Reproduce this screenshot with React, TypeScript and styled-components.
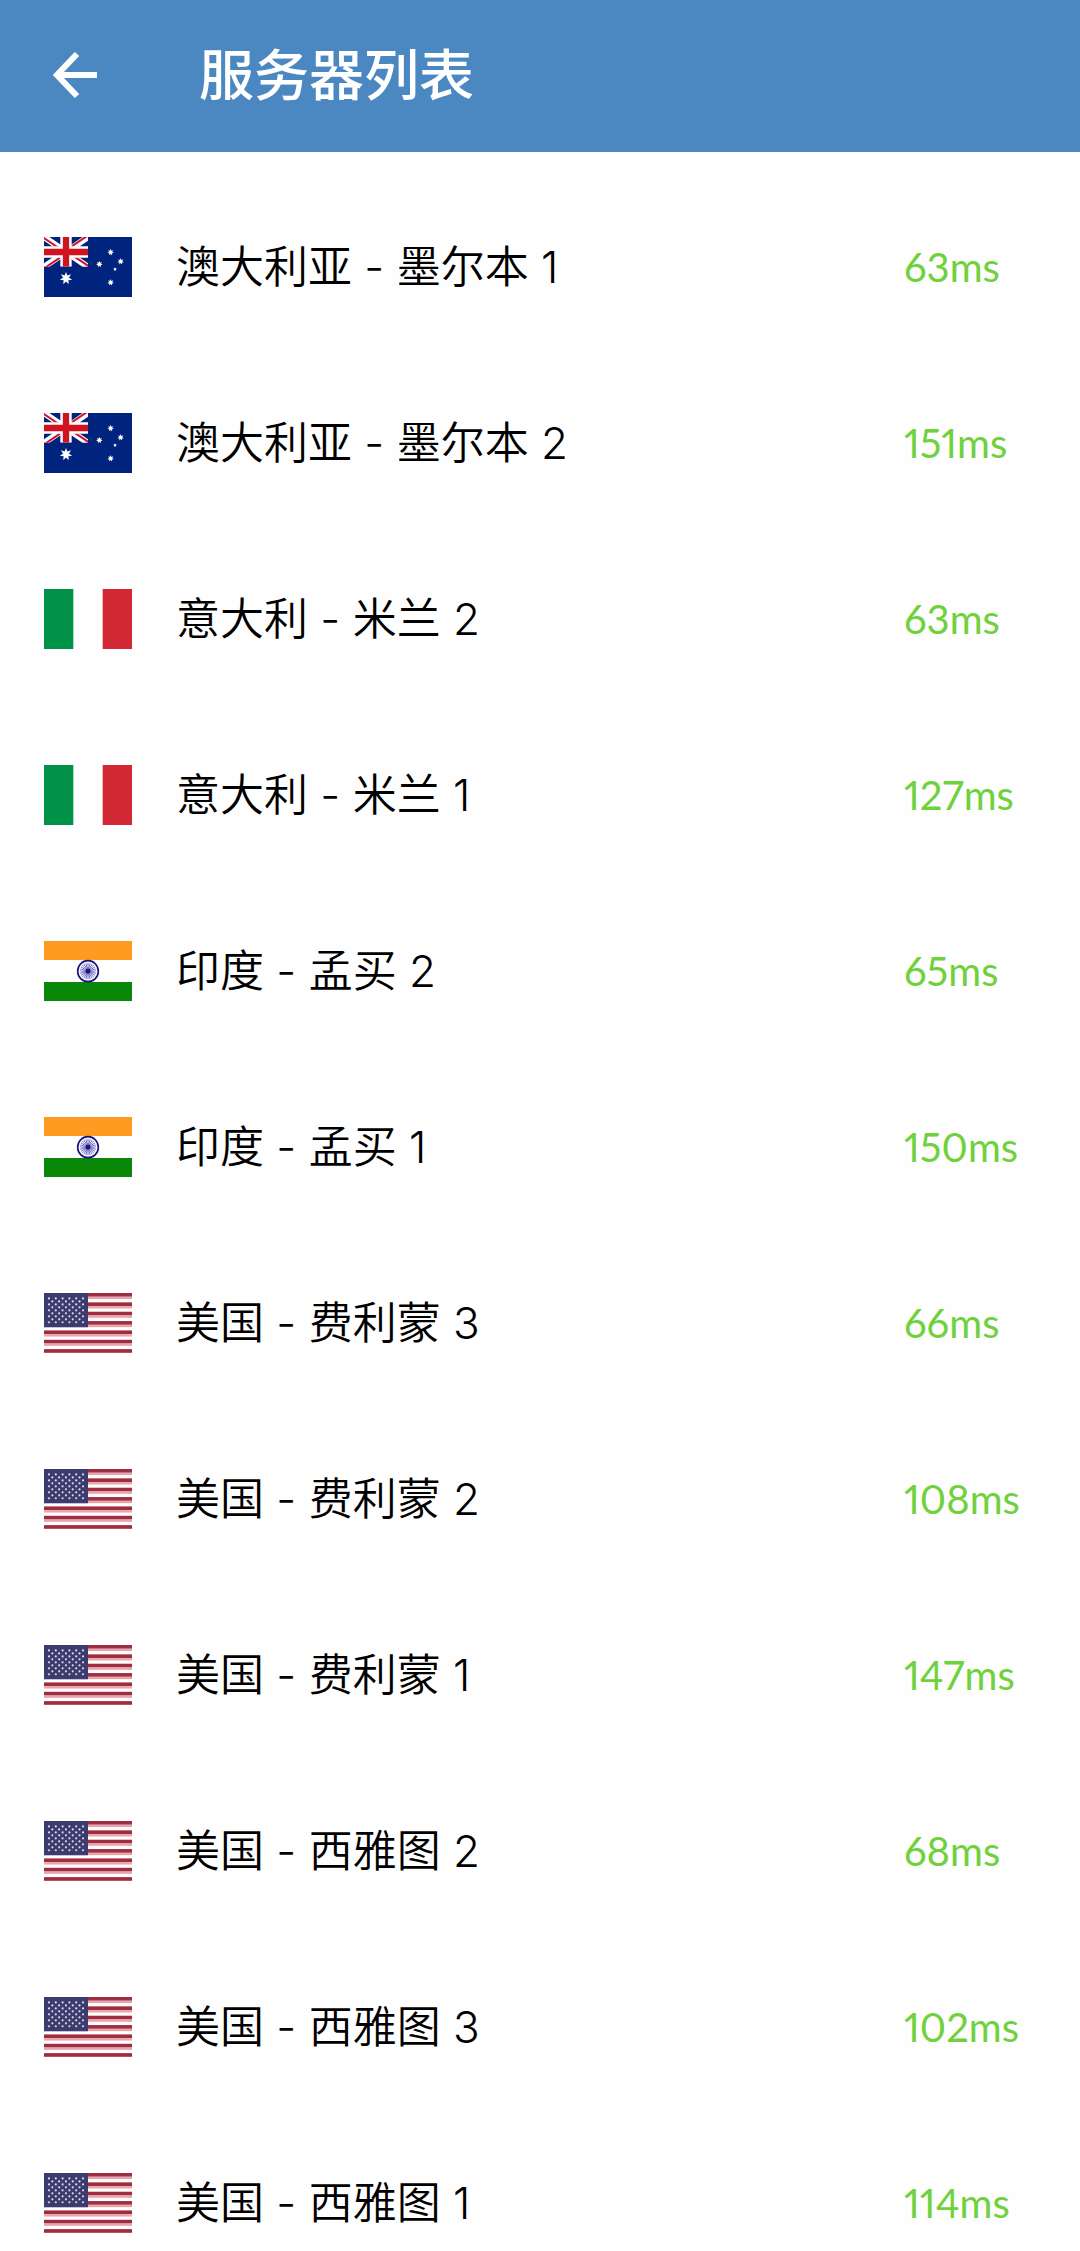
import React from "react";
import styled, { createGlobalStyle } from "styled-components";

const GlobalStyle = createGlobalStyle`
  *, *::before, *::after { box-sizing: border-box; }
  body {
    margin: 0;
    background: #fefefe;
    color: #000;
    font-family: Inter, "Noto Sans CJK SC", sans-serif;
  }
`;

const Screen = styled.div`
  min-height: 100vh;
  overflow: hidden;
`;

const AppBar = styled.header`
  display: flex;
  align-items: center;
  gap: 77px;
  height: 152px;
  padding: 0 28px 3px;
  background: #4b88c1;
  color: #fff;
`;

const BackButton = styled.button`
  display: flex;
  align-items: center;
  justify-content: center;
  width: 94px;
  height: 94px;
  padding: 0;
  border: 0;
  background: none;
  color: inherit;
  cursor: pointer;
`;

const Title = styled.h1`
  margin: 0;
  font-size: 55px;
  line-height: 80px;
  font-weight: 500;
`;

const List = styled.ul`
  margin: 0;
  padding: 27px 0 0;
  list-style: none;
`;

const Row = styled.button`
  display: flex;
  align-items: center;
  width: 100%;
  height: 176px;
  padding: 0 44px;
  border: 0;
  background: none;
  color: inherit;
  font: inherit;
  text-align: left;
  cursor: pointer;
`;

const FlagSvg = styled.svg`
  display: block;
  flex: none;
  width: 88px;
  height: 60px;
`;

const Name = styled.span`
  flex: 1;
  padding-left: 44px;
  font-size: 44px;
  line-height: 64px;
  font-weight: 350;
`;

const Ping = styled.span`
  width: 132px;
  color: #6fd13c;
  font-family: Lato, sans-serif;
  font-variant-numeric: proportional-nums;
  font-size: 40px;
  line-height: 64px;
  white-space: nowrap;
`;

type Country = "au" | "it" | "in" | "us";

const starPoints = (cx: number, cy: number, r: number, tips: number) =>
  Array.from({ length: tips * 2 }, (_, i) => {
    const radius = i % 2 ? r * 0.48 : r;
    const a = (Math.PI * i) / tips - Math.PI / 2;
    return `${(cx + radius * Math.cos(a)).toFixed(1)},${(cy + radius * Math.sin(a)).toFixed(1)}`;
  }).join(" ");

const Australia = () => (
  <>
    <rect width="264" height="177" fill="#00247d" />
    <svg width="132" height="88" viewBox="0 0 132 88">
      <path d="M0 0L132 88M132 0L0 88" stroke="#fff" strokeWidth="18" />
      <path
        d="M-2 2L66 47M134 -6L66 39M134 86L66 41M-2 94L66 49"
        stroke="#cf142b"
        strokeWidth="6"
      />
      <path d="M66 0V88M0 44H132" stroke="#fff" strokeWidth="34" />
      <path d="M66 0V88M0 44H132" stroke="#cf1420" strokeWidth="19" />
    </svg>
    <g fill="#fff">
      <polygon points={starPoints(66, 122, 19, 7)} />
      <polygon points={starPoints(200, 45, 10, 7)} />
      <polygon points={starPoints(166, 80, 10, 7)} />
      <polygon points={starPoints(230, 72, 10, 7)} />
      <polygon points={starPoints(200, 134, 10, 7)} />
      <polygon points={starPoints(213, 95, 6, 5)} />
    </g>
  </>
);

const Italy = () => (
  <>
    <rect width="264" height="177" fill="#fff" />
    <rect width="88" height="177" fill="#009246" />
    <rect x="176" width="88" height="177" fill="#d12834" />
  </>
);

const India = () => (
  <>
    <rect width="264" height="177" fill="#fff" />
    <rect width="264" height="56" fill="#ff9a20" />
    <rect y="121" width="264" height="56" fill="#088608" />
    <circle cx="132" cy="89" r="31" fill="#f4f4ff" stroke="#1b1478" strokeWidth="5" />
    {Array.from({ length: 12 }, (_, i) => (
      <path
        key={i}
        d="M132 65V113"
        stroke="#4a46a5"
        strokeWidth="2"
        transform={`rotate(${i * 15} 132 89)`}
      />
    ))}
    <circle cx="132" cy="89" r="7" fill="#1b1478" />
  </>
);

const UnitedStates = () => (
  <>
    <rect width="264" height="177" fill="#fff" />
    {Array.from({ length: 7 }, (_, i) => (
      <g key={i}>
        <rect y={i * 27.6} width="264" height="11" fill="#a02c40" />
        <rect y={i * 27.6 + 11} width="264" height="7" fill="#e9a3ad" />
      </g>
    ))}
    <rect width="132" height="101" fill="#3c3b6e" />
    {Array.from({ length: 9 }, (_, r) =>
      Array.from({ length: r % 2 ? 5 : 6 }, (_, c) => (
        <circle
          key={`${r}-${c}`}
          cx={15 + (r % 2 ? 10 : 0) + c * 20.4}
          cy={16 + r * 8.8}
          r="3.2"
          fill="#dcdcec"
        />
      ))
    )}
  </>
);

const flags: Record<Country, { label: string; Art: React.FC }> = {
  au: { label: "澳大利亚", Art: Australia },
  it: { label: "意大利", Art: Italy },
  in: { label: "印度", Art: India },
  us: { label: "美国", Art: UnitedStates },
};

const Flag = ({ country }: { country: Country }) => {
  const { label, Art } = flags[country];
  return (
    <FlagSvg viewBox="0 0 264 177" preserveAspectRatio="none" role="img" aria-label={label}>
      <Art />
    </FlagSvg>
  );
};

const servers: { country: Country; city: string; ping: number }[] = [
  { country: "au", city: "墨尔本 1", ping: 63 },
  { country: "au", city: "墨尔本 2", ping: 151 },
  { country: "it", city: "米兰 2", ping: 63 },
  { country: "it", city: "米兰 1", ping: 127 },
  { country: "in", city: "孟买 2", ping: 65 },
  { country: "in", city: "孟买 1", ping: 150 },
  { country: "us", city: "费利蒙 3", ping: 66 },
  { country: "us", city: "费利蒙 2", ping: 108 },
  { country: "us", city: "费利蒙 1", ping: 147 },
  { country: "us", city: "西雅图 2", ping: 68 },
  { country: "us", city: "西雅图 3", ping: 102 },
  { country: "us", city: "西雅图 1", ping: 114 },
];

export default function App() {
  return (
    <Screen lang="zh-CN">
      <GlobalStyle />
      <AppBar>
        <BackButton type="button" aria-label="返回">
          <svg width="44" height="46" viewBox="0 0 44 46" fill="none" stroke="currentColor" strokeWidth="6">
            <path d="M24 2L4 23L24 44M4 23H44" />
          </svg>
        </BackButton>
        <Title>服务器列表</Title>
      </AppBar>
      <List>
        {servers.map(({ country, city, ping }) => (
          <li key={city}>
            <Row type="button">
              <Flag country={country} />
              <Name>{`${flags[country].label} - ${city}`}</Name>
              <Ping>{`${ping}ms`}</Ping>
            </Row>
          </li>
        ))}
      </List>
    </Screen>
  );
}
